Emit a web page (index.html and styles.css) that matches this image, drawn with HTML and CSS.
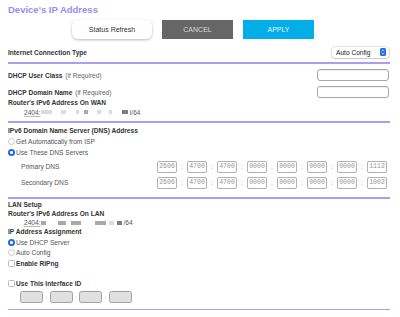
FILE: index.html
```html
<!DOCTYPE html>
<html lang="en">
    <head>
        <meta charset="UTF-8">
        <meta name="viewport" content="width=device-width, initial-scale=1.0">
        <title>Device's IP Address</title>

        <link rel="stylesheet" href="styles.css">
    </head>
    <body>
        <div class="page">

            <h1 class="title">Device's IP Address</h1>

            <div class="actions">
                <button class="btn btn-refresh">Status Refresh</button>
                <button class="btn btn-cancel">CANCEL</button>
                <button class="btn btn-apply">APPLY</button>
            </div>

            <div class="row row-conn">
                <span class="label">Internet Connection Type</span>
                <div class="select">
                    <span>Auto Config</span>
                    <svg class="stepper" width="6" height="8" viewBox="0 0 6 8">
                        <rect width="6" height="8" rx="1.5" fill="#1f6fe5"/>
                        <path d="M1.6 3.2 L3 1.8 L4.4 3.2 M1.6 4.8 L3 6.2 L4.4 4.8" stroke="#fff" stroke-width="0.8" fill="none"/>
                    </svg>
                </div>
            </div>
            <div class="rule rule-first"></div>

            <!-- WAN -->
            <div class="row row-field">
                <span class="label">DHCP User Class <span class="hint">(if Required)</span></span>
                <input class="text-input" type="text">
            </div>
            <div class="row row-field row-field2">
                <span class="label">DHCP Domain Name <span class="hint">(if Required)</span></span>
                <input class="text-input" type="text">
            </div>
            <div class="line label">Router's IPv6 Address On WAN</div>
            <div class="addr">
                <span class="addr-start">2404:</span>
                <span class="mask m-light" style="margin-left:0;width:11px"></span>
                <span class="mask m-light" style="margin-left:9px;width:5px"></span>
                <span class="mask m-light" style="margin-left:10px;width:3px"></span>
                <span class="mask m-mid" style="margin-left:5px;width:4px"></span>
                <span class="mask m-light" style="margin-left:9px;width:4px"></span>
                <span class="mask m-light" style="margin-left:8px;width:3px"></span>
                <span class="mask m-dark" style="margin-left:10px;width:6px"></span>
                <span class="addr-end">I/64</span>
            </div>
            <div class="rule rule-thick"></div>

            <!-- DNS -->
            <div class="line line-head label">IPv6 Domain Name Server (DNS) Address</div>
            <div class="option">
                <span class="radio"></span>
                <span>Get Automatically from ISP</span>
            </div>
            <div class="option">
                <span class="radio radio-on"></span>
                <span>Use These DNS Servers</span>
            </div>
            <div class="dns-row">
                <span class="dns-label">Primary DNS</span>
                <div class="dns-boxes">
                    <span class="dns-box">2606</span><span class="colon">:</span>
                    <span class="dns-box">4700</span><span class="colon">:</span>
                    <span class="dns-box">4700</span><span class="colon">:</span>
                    <span class="dns-box">0000</span><span class="colon">:</span>
                    <span class="dns-box">0000</span><span class="colon">:</span>
                    <span class="dns-box">0000</span><span class="colon">:</span>
                    <span class="dns-box">0000</span><span class="colon">:</span>
                    <span class="dns-box">1112</span>
                </div>
            </div>
            <div class="dns-row dns-row2">
                <span class="dns-label">Secondary DNS</span>
                <div class="dns-boxes">
                    <span class="dns-box">2606</span><span class="colon">:</span>
                    <span class="dns-box">4700</span><span class="colon">:</span>
                    <span class="dns-box">4700</span><span class="colon">:</span>
                    <span class="dns-box">0000</span><span class="colon">:</span>
                    <span class="dns-box">0000</span><span class="colon">:</span>
                    <span class="dns-box">0000</span><span class="colon">:</span>
                    <span class="dns-box">0000</span><span class="colon">:</span>
                    <span class="dns-box">1002</span>
                </div>
            </div>
            <div class="rule rule-thick rule-lan"></div>

            <!-- LAN -->
            <div class="lan">
                <div class="line label">LAN Setup</div>
                <div class="line label">Router's IPv6 Address On LAN</div>
                <div class="addr addr-lan">
                    <span class="addr-start">2404:</span>
                    <span class="mask m-mid" style="margin-left:0;width:5px"></span>
                    <span class="mask m-mid" style="margin-left:12px;width:8px"></span>
                    <span class="mask m-mid" style="margin-left:5px;width:10px"></span>
                    <span class="mask m-mid" style="margin-left:14px;width:11px"></span>
                    <span class="mask m-light" style="margin-left:3px;width:5px"></span>
                    <span class="mask m-dark" style="margin-left:3px;width:5px"></span>
                    <span class="addr-end">/64</span>
                </div>
                <div class="line line-assign label">IP Address Assignment</div>
                <div class="option option-lan">
                    <span class="radio radio-on"></span>
                    <span>Use DHCP Server</span>
                </div>
                <div class="option option-lan">
                    <span class="radio"></span>
                    <span>Auto Config</span>
                </div>
                <div class="option">
                    <span class="check"></span>
                    <span class="label">Enable RIPng</span>
                </div>
            </div>

            <div class="option option-iface">
                <span class="check"></span>
                <span class="label">Use This Interface ID</span>
            </div>
            <div class="iface-boxes">
                <span class="iface-box"></span><span class="colon">:</span>
                <span class="iface-box"></span><span class="colon">:</span>
                <span class="iface-box"></span><span class="colon">:</span>
                <span class="iface-box"></span>
            </div>
            <div class="rule rule-last"></div>

        </div>
    </body>
</html>
```

FILE: styles.css
```css
body{
    margin: 0;
    background-color: #fff;
    font-family: "Liberation Sans", Arial, sans-serif;
    font-size: 6.6px;
    color: #555;
}
.page{
    padding: 0 10px 0 8px;
}
.title{
    margin: 3px 0 0 0;
    font-size: 9.5px;
    line-height: 14px;
    font-weight: bold;
    color: #9a8cf2;
}

/* botoes */
.actions{
    display: flex;
    gap: 10px;
    padding-left: 64px;
    margin-top: 3px;
}
.btn{
    height: 19px;
    border: 0;
    font-family: "Liberation Sans", Arial, sans-serif;
    font-size: 7px;
    padding: 0;
}
.btn-refresh{
    width: 80px;
    background-color: #fff;
    color: #333;
    border-radius: 6px;
    box-shadow: 0 1px 3px rgba(0,0,0,0.28);
}
.btn-cancel{
    width: 71px;
    background-color: #666;
    color: #d8d8d8;
}
.btn-apply{
    width: 71px;
    background-color: #03ade8;
    color: #e6f6ff;
}

.label{
    font-weight: bold;
    color: #333;
}
.hint{
    font-weight: normal;
    color: #666;
    margin-left: 1px;
}
.row{
    display: flex;
    justify-content: space-between;
    align-items: center;
}
.row-conn{
    height: 16px;
    margin-top: 5px;
}
.select{
    display: flex;
    align-items: center;
    justify-content: space-between;
    width: 50px;
    height: 11px;
    padding: 0 3px 0 4px;
    background-color: #fff;
    border-radius: 3px;
    box-shadow: 0 0 0 0.5px rgba(0,0,0,0.15), 0 0.5px 1.5px rgba(0,0,0,0.25);
    color: #222;
    margin-right: 1px;
}
.stepper{
    display: block;
}

.rule{
    background-color: #a99df4;
}
.rule-first{
    height: 2px;
    margin-top: 2px;
}
.rule-thick{
    height: 2px;
    margin-top: 4px;
}
.rule-lan{
    margin-top: 7.5px;
}
.rule-last{
    height: 1px;
    margin-top: 5px;
}

.row-field{
    height: 14px;
    margin-top: 4px;
}
.row-field2{
    margin-top: 3px;
}
.text-input{
    box-sizing: border-box;
    width: 72px;
    height: 12px;
    border: 1px solid #a8a8a8;
    border-radius: 3px;
    margin: 0 1px 0 0;
    padding: 0;
    background-color: #fff;
    box-shadow: inset 0 0.5px 1px rgba(0,0,0,0.12);
}
.line{
    height: 8px;
    line-height: 8px;
}
.line-head{
    height: 10px;
    line-height: 10px;
    margin-top: 3px;
}

.addr{
    display: flex;
    align-items: center;
    height: 10px;
    padding-left: 16px;
}
.addr-start{
    color: #555;
    text-decoration: underline;
    text-decoration-color: #bbb;
}
.addr-end{
    margin-left: 2px;
    color: #555;
}
.mask{
    height: 4px;
    filter: blur(0.6px);
}
.m-light{
    background-color: #dcdcdc;
}
.m-mid{
    background-color: #a9a9a9;
}
.m-dark{
    background-color: #7e7e7e;
}

/* opcoes */
.option{
    display: flex;
    align-items: center;
    height: 11px;
    gap: 1px;
}
.radio{
    box-sizing: border-box;
    width: 7px;
    height: 7px;
    border-radius: 50%;
    border: 0.7px solid #c8c8c8;
    background-color: #fff;
    position: relative;
}
.radio-on{
    border: 0;
    background-color: #1a6ae6;
}
.radio-on::after{
    content: "";
    position: absolute;
    left: 2.2px;
    top: 2.2px;
    width: 2.6px;
    height: 2.6px;
    border-radius: 50%;
    background-color: #fff;
}
.check{
    box-sizing: border-box;
    width: 7px;
    height: 7px;
    border-radius: 1.5px;
    border: 0.7px solid #bcbcbc;
    background-color: #fff;
}

.dns-row{
    display: flex;
    justify-content: space-between;
    align-items: center;
    height: 14px;
    margin-top: 1.5px;
}
.dns-row2{
    margin-top: 2px;
}
.dns-label{
    padding-left: 13px;
    color: #555;
}
.dns-boxes{
    display: flex;
    align-items: center;
    margin-right: 3px;
}
.dns-box{
    box-sizing: border-box;
    width: 20px;
    height: 12px;
    border: 1px solid #b0b0b0;
    border-radius: 2px;
    font-family: "Liberation Mono", "Courier New", monospace;
    font-size: 6.5px;
    line-height: 10px;
    text-align: center;
    color: #959595;
}
.colon{
    width: 10px;
    text-align: center;
    color: #999;
}

/* LAN */
.lan{
    padding-top: 1px;
}
.lan .line{
    height: 9px;
    line-height: 9px;
}
.lan .addr{
    height: 9px;
}
.lan .line-assign{
    height: 10px;
    line-height: 10px;
}
.option-lan{
    height: 10.5px;
}

.option-iface{
    height: 12px;
    margin-top: 8px;
}
.iface-boxes{
    display: flex;
    align-items: center;
    height: 14px;
    margin-top: 1px;
    padding-left: 12px;
}
.iface-box{
    box-sizing: border-box;
    width: 23px;
    height: 12px;
    border: 1px solid #a0a0a0;
    border-radius: 2.5px;
    background-color: #e0e0e0;
}
.iface-boxes .colon{
    width: 6.5px;
    font-size: 6px;
}
```
